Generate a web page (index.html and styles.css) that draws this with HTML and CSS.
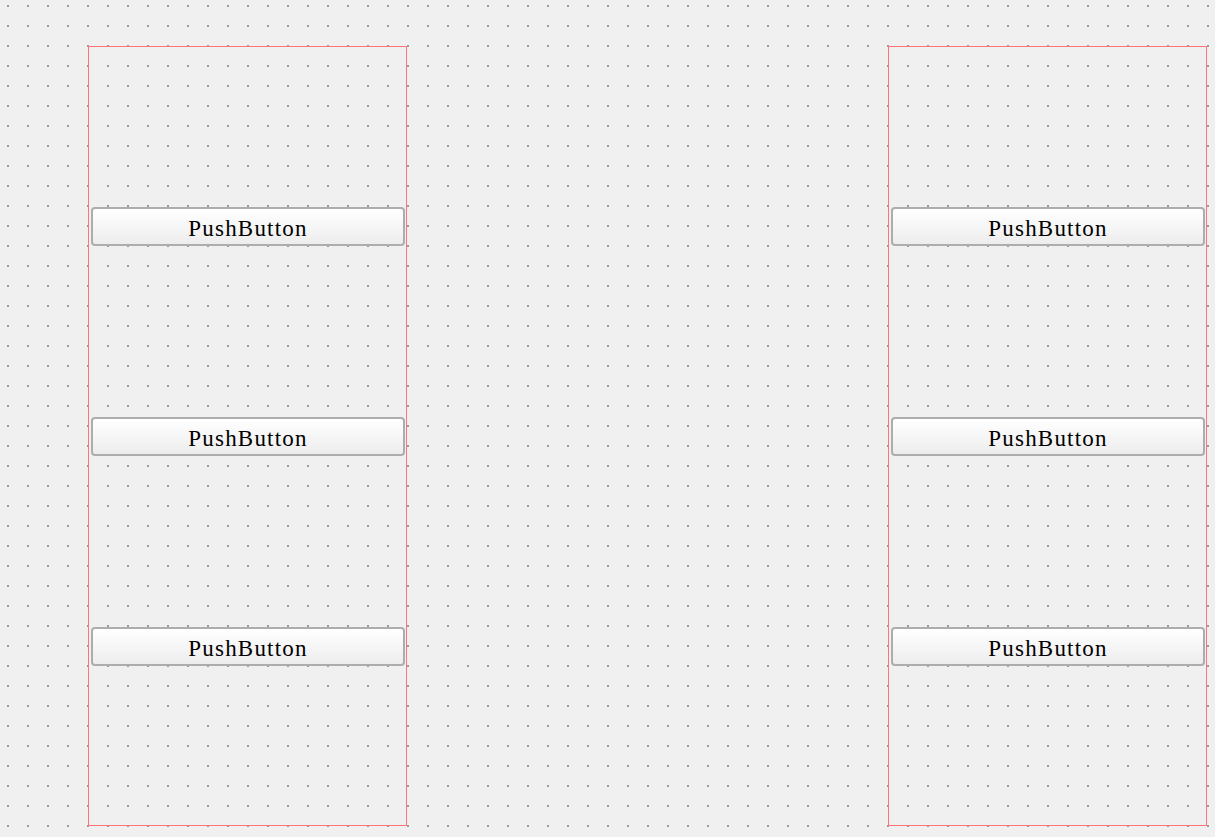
FILE: index.html
```html
<!DOCTYPE html>
<html>
<head>
<meta charset="utf-8">
<link rel="stylesheet" href="styles.css">
</head>
<body>
<div class="canvas">
  <div class="frame">
    <button class="push">PushButton</button>
    <button class="push">PushButton</button>
    <button class="push">PushButton</button>
  </div>
  <div class="frame">
    <button class="push">PushButton</button>
    <button class="push">PushButton</button>
    <button class="push">PushButton</button>
  </div>
</div>
</body>
</html>
```
FILE: styles.css
```css
html, body {
  margin: 0;
  padding: 0;
  height: 100%;
}
body {
  background-color: #f0f0f0;
  background-image: conic-gradient(from 0deg at 2px 2px, transparent 75%, #9c9c9c 0);
  background-size: 20px 20px;
  background-position: 7px 5px;
  overflow: hidden;
}
.canvas {
  display: flex;
  gap: 481px;
  padding: 46px 0 0 88px;
}
.frame {
  box-sizing: border-box;
  width: 319px;
  height: 780px;
  border: 1px solid #ff7474;
  display: flex;
  flex-direction: column;
  gap: 171px;
  padding: 160px 1px 0 2px;
}
.push {
  box-sizing: border-box;
  width: 314px;
  height: 39px;
  margin: 0;
  border: 2px solid #adadad;
  border-radius: 4px;
  background: linear-gradient(#ffffff, #ededed);
  font-family: "Liberation Serif", serif;
  font-size: 23px;
  letter-spacing: 1.2px;
  color: #000;
  padding: 5px 0 0 0;
  line-height: 28px;
  text-align: center;
}
```
